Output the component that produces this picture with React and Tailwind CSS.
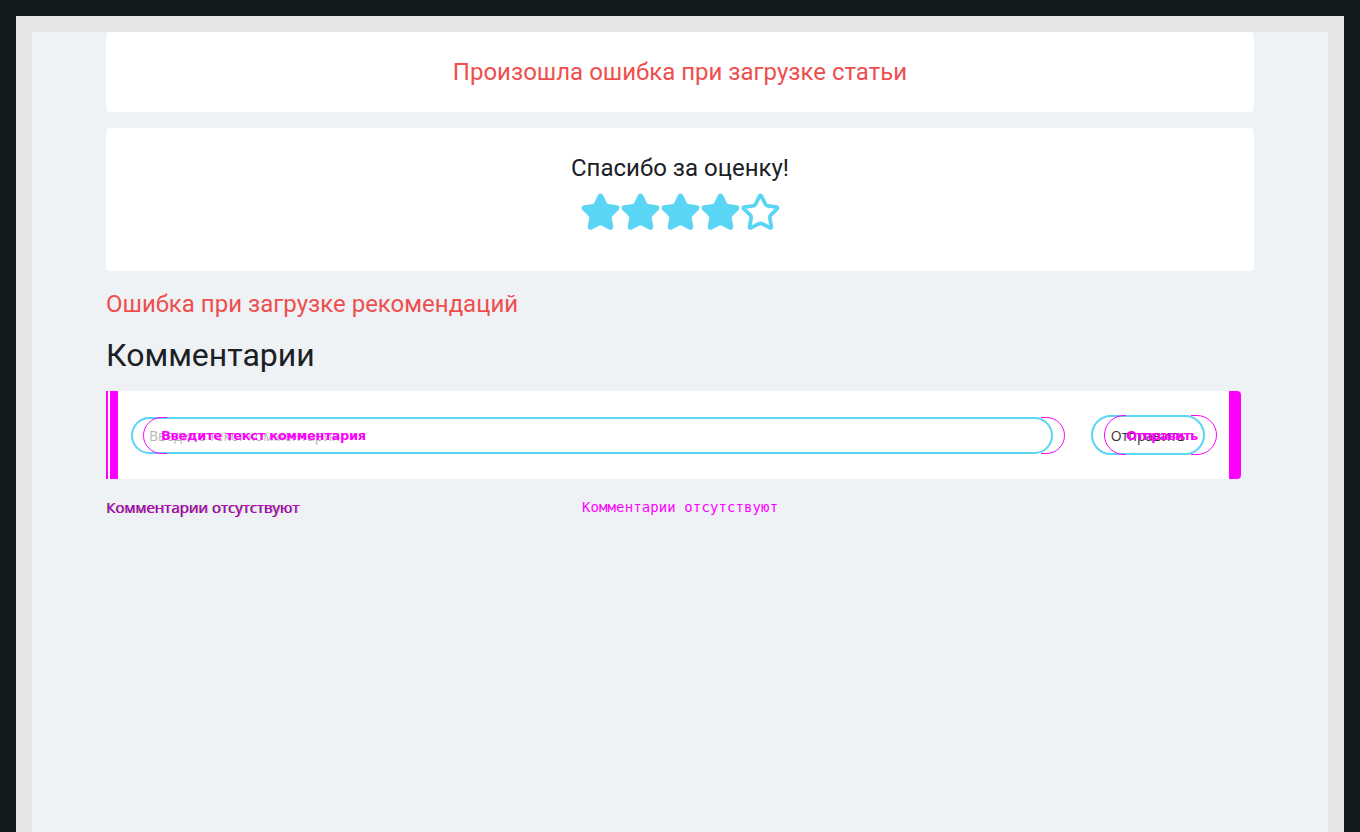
import React from "react";
import { Star } from "lucide-react";

const CYAN = "#5bd5f4";

const Stars = ({ rating }) => (
  <div className="flex items-center justify-center">
    {[1, 2, 3, 4, 5].map((i) => (
      <Star
        key={i}
        size={41}
        strokeWidth={2.2}
        color={CYAN}
        fill={i <= rating ? CYAN : "none"}
        className="-mx-[0.5px]"
      />
    ))}
  </div>
);

const CommentForm = () => (
  <div className="relative mt-4 w-[1135px] h-[88px] bg-white rounded-sm">
    {/* diff ghost bars */}
    <div className="absolute left-0 top-0 bottom-0 w-[2px] bg-[#ff00ff]" />
    <div className="absolute left-[4px] top-0 bottom-0 w-[8px] bg-[#ff00ff]" />
    <div className="absolute right-0 top-0 bottom-0 w-[12px] bg-[#ff00ff] rounded-r-sm" />

    <form className="flex items-center h-full pl-[25px] pr-[36px]">
      <input
        type="text"
        placeholder="Введите текст комментария"
        className="flex-1 h-[37px] border-2 border-[#5bd5f4] rounded-full px-4 text-[14px] text-[#333] placeholder:text-[#b5b5b5] outline-none"
        style={{ fontFamily: "'Open Sans', sans-serif" }}
      />
      <button
        type="button"
        className="ml-[38px] w-[114px] h-[40px] border-2 border-[#5bd5f4] rounded-full text-[14px] text-[#333] bg-white"
        style={{ fontFamily: "'Open Sans', sans-serif" }}
      >
        Отправить
      </button>
    </form>

    {/* diff ghosts */}
    <div className="pointer-events-none absolute left-[37px] top-[26px] w-[922px] h-[37px] rounded-full border border-[#ff00ff] [clip-path:inset(0_calc(100%-24px)_0_0)]" />
    <div className="pointer-events-none absolute left-[37px] top-[26px] w-[922px] h-[37px] rounded-full border border-[#ff00ff] [clip-path:inset(0_0_0_calc(100%-24px))]" />
    <div
      className="pointer-events-none absolute left-[55px] top-[35px] text-[13px] font-bold tracking-[-0.3px] text-[#ff00ff]"
      style={{ fontFamily: "'DejaVu Sans', sans-serif" }}
    >
      Введите текст комментария
    </div>
    <div className="pointer-events-none absolute left-[998px] top-[24px] w-[113px] h-[40px] rounded-full border border-[#ff00ff] [clip-path:inset(0_calc(100%-22px)_0_0)]" />
    <div className="pointer-events-none absolute left-[998px] top-[24px] w-[113px] h-[40px] rounded-full border border-[#ff00ff] [clip-path:inset(0_0_0_calc(100%-26px))]" />
    <div
      className="pointer-events-none absolute left-[1020px] top-[35px] text-[13px] font-bold tracking-[-0.8px] text-[#ff00ff]"
      style={{ fontFamily: "'DejaVu Sans', sans-serif" }}
    >
      Отправить
    </div>
  </div>
);

export default function App() {
  return (
    <div className="min-h-[832px] bg-[#131a1e] pt-4 px-4">
      <div className="min-h-[816px] bg-[#e6e6e8] pt-4 px-4">
        <div
          className="min-h-[800px] bg-[#eef2f5] pb-10"
          style={{ fontFamily: "Roboto, 'Liberation Sans', sans-serif" }}
        >
          <div className="w-[1148px] mx-auto">
            <div className="bg-white rounded p-6 text-center">
              <p className="text-2xl leading-8 text-[#ef4e4e]">
                Произошла ошибка при загрузке статьи
              </p>
            </div>

            <div className="mt-4 bg-white rounded pt-6 pb-[38px] text-center">
              <p className="text-2xl leading-8 text-[#1b2025]">Спасибо за оценку!</p>
              <div className="mt-2">
                <Stars rating={4} />
              </div>
            </div>

            <p className="mt-[17px] text-2xl leading-8 text-[#ef4e4e]">
              Ошибка при загрузке рекомендаций
            </p>

            <h2 className="mt-[15px] text-[32px] leading-10 text-[#1b2025]">Комментарии</h2>

            <CommentForm />

            <div className="relative mt-[18px] h-[20px]">
              <p
                className="text-[15px] leading-5 text-[#222]"
                style={{ fontFamily: "'Open Sans', sans-serif" }}
              >
                Комментарии отсутствуют
              </p>
              <p
                className="absolute left-[1px] top-0 text-[15px] leading-5 text-[#ff00ff] opacity-75"
                style={{ fontFamily: "'Open Sans', sans-serif" }}
              >
                Комментарии отсутствуют
              </p>
              <p
                className="absolute left-[476px] top-0 text-[14px] leading-5 text-[#ff00ff]"
                style={{ fontFamily: "'DejaVu Sans Mono', monospace", letterSpacing: "0.1px" }}
              >
                Комментарии отсутствуют
              </p>
            </div>
          </div>
        </div>
      </div>
    </div>
  );
}
